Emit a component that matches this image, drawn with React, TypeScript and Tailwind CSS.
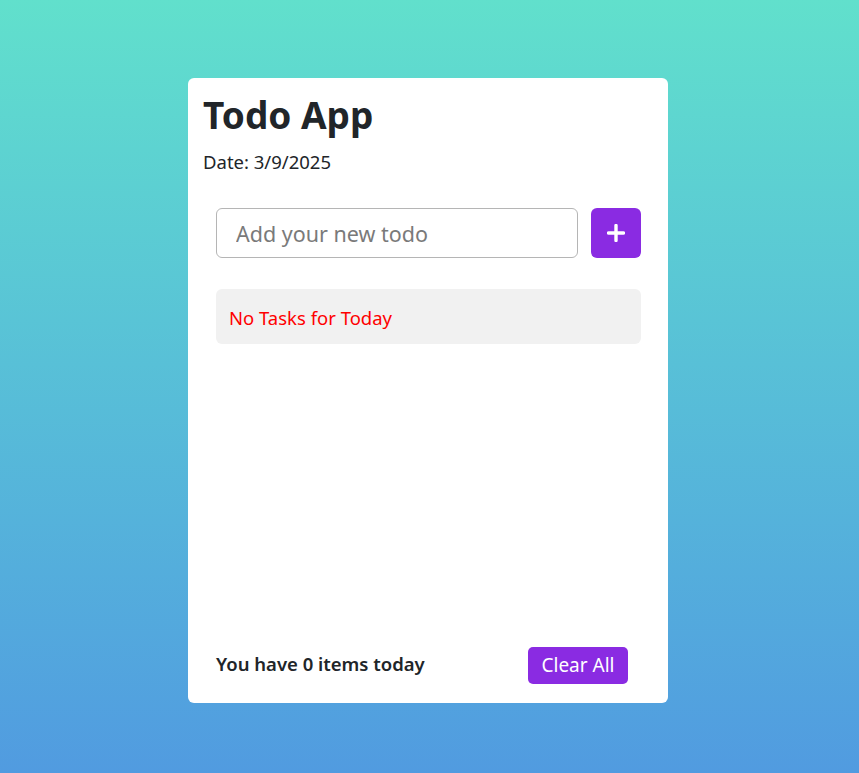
import React from "react";

export default function App() {
  return (
    <div
      className="min-h-screen w-full bg-gradient-to-b from-[#61e0cc] to-[#519be0] pt-[78px] pb-[70px]"
      style={{ fontFamily: '"Noto Sans", "Open Sans", sans-serif' }}
    >
      <div className="ml-[188px] w-[480px] h-[625px] bg-white rounded-[6px] flex flex-col">
        <div className="px-[15px] pt-[13px]">
          <h1 className="text-[37px] font-bold text-[#212529] leading-[48px]">Todo App</h1>
          <p className="text-[18.5px] text-[#212529] mt-[11px] leading-[24px]">Date: 3/9/2025</p>
        </div>
        <div className="pl-[28px] pr-[27px] mt-[34px] flex gap-[13px]">
          <input
            className="flex-1 h-[50px] border border-[#b5b5b5] rounded-[6px] px-[19px] text-[21.5px] text-[#333] placeholder:text-[#7a7a7a] outline-none"
            placeholder="Add your new todo"
          />
          <button className="w-[50px] h-[50px] rounded-[6px] bg-[#8a2be2] flex items-center justify-center">
            <svg width="18" height="18" viewBox="0 0 18 18">
              <path d="M9 1.5v15M1.5 9h15" stroke="white" strokeWidth="3.4" strokeLinecap="round" />
            </svg>
          </button>
        </div>
        <div className="ml-[28px] mr-[27px] mt-[31px] h-[55px] bg-[#f1f1f1] rounded-[6px] flex items-center px-[13px]">
          <span className="text-[18.5px] text-[#ff0000] mt-[3px]">No Tasks for Today</span>
        </div>
        <div className="flex-1" />
        <div className="pl-[28px] pr-[40px] pb-[19px] flex items-center justify-between">
          <span className="text-[18.5px] font-semibold text-[#212529] mt-[-4px]">You have 0 items today</span>
          <button className="w-[100px] h-[37px] rounded-[5px] bg-[#8a2be2] text-white text-[19px] leading-none">
            Clear All
          </button>
        </div>
      </div>
    </div>
  );
}
